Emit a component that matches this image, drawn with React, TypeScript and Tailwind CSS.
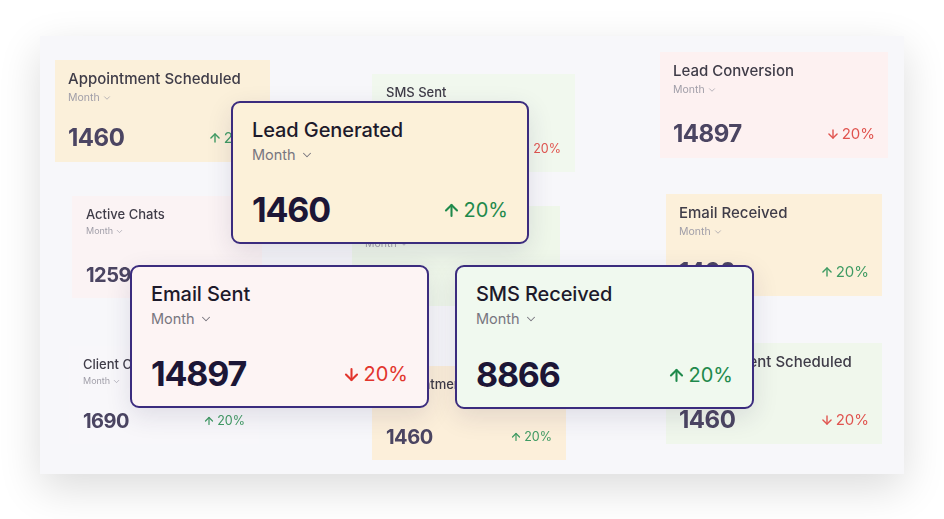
import { ArrowUp, ArrowDown, ChevronDown } from "lucide-react"

type Trend = "up" | "down"

type BgCardProps = {
  title: string
  value: string
  trend: Trend
  pos: string
  bg: string
  small?: boolean
}

// faded cards sitting in the back of the canvas
function BgCard({ title, value, trend, pos, bg, small }: BgCardProps) {
  return (
    <div className={`absolute ${pos} ${bg} flex flex-col blur-[0.4px] ${small ? "px-[14px] pt-[8px] pb-[11px]" : "px-[13px] pt-[8px] pb-[10px]"}`}>
      <div className={`text-[#3f3c48] font-medium whitespace-nowrap ${small ? "text-[13px] leading-[20px]" : "text-[15px] leading-[22px]"}`}>
        {title}
      </div>
      <div className={`flex items-center gap-[2px] text-[#a09ea8] ${small ? "text-[9px] leading-[14px]" : "text-[10.5px] leading-[16px]"}`}>
        Month <ChevronDown size={small ? 9 : 10} strokeWidth={1.8} />
      </div>
      <div className="flex-1" />
      <div className="flex items-center justify-between">
        <span className={`font-bold text-[#4b4562] tracking-[-0.5px] ${small ? "text-[20px] leading-[24px]" : "text-[24px] leading-[28px]"}`}>
          {value}
        </span>
        <span
          className={`flex items-center gap-[2px] ${trend === "up" ? "text-[#3f9b63]" : "text-[#e0544f]"} ${small ? "text-[12.5px]" : "text-[15px]"}`}
        >
          {trend === "up" ? <ArrowUp size={small ? 12 : 14} strokeWidth={2.4} /> : <ArrowDown size={small ? 12 : 14} strokeWidth={2.4} />}
          20%
        </span>
      </div>
    </div>
  )
}

type MainCardProps = {
  title: string
  value: string
  trend: Trend
  pos: string
  bg: string
}

function MainCard({ title, value, trend, pos, bg }: MainCardProps) {
  return (
    <div
      className={`absolute ${pos} ${bg} flex flex-col rounded-[9px] border-2 border-[#3b2c7e] px-[19px] pt-[12px] pb-[13px] shadow-[0_8px_26px_rgba(40,30,80,0.12)]`}
    >
      <div className="text-[20px] leading-[30px] font-medium text-[#1d1a2b] tracking-[-0.1px]">{title}</div>
      <div className="flex items-center gap-[4px] text-[14.5px] leading-[20px] text-[#78767f]">
        Month <ChevronDown size={14} strokeWidth={1.8} />
      </div>
      <div className="flex-1" />
      <div className="flex items-center justify-between">
        <span className="text-[34px] leading-[38px] font-bold text-[#1c1636] tracking-[-1.2px]">{value}</span>
        <span
          className={`flex items-center gap-[3px] text-[20px] ${trend === "up" ? "text-[#1f8a4c]" : "text-[#e2352d]"}`}
        >
          {trend === "up" ? <ArrowUp size={19} strokeWidth={2.6} /> : <ArrowDown size={19} strokeWidth={2.6} />}
          20%
        </span>
      </div>
    </div>
  )
}

export default function App() {
  return (
    <div
      className="w-[944px] h-[519px] bg-white pt-[36px] pl-[40px] overflow-hidden"
      style={{ fontFamily: "Inter, 'Noto Sans', sans-serif" }}
    >
      <div className="relative w-[864px] h-[438px] bg-[#f7f7fa] shadow-[0_14px_40px_rgba(0,0,0,0.14)]">
        {/* back layer */}
        <BgCard title="Appointment Scheduled" value="1460" trend="up" pos="left-[15px] top-[24px] w-[215px] h-[102px]" bg="bg-[#fbf0da]" />
        <BgCard title="SMS Sent" value="4521" trend="down" pos="left-[332px] top-[38px] w-[203px] h-[98px]" bg="bg-[#f1f8ee]" small />
        <BgCard title="Lead Conversion" value="14897" trend="down" pos="left-[620px] top-[16px] w-[228px] h-[106px]" bg="bg-[#fdf1f1]" />
        <BgCard title="Active Chats" value="12590" trend="up" pos="left-[32px] top-[160px] w-[190px] h-[102px]" bg="bg-[#fbf3f4]" small />
        <BgCard title="SMS Delivered" value="12541" trend="up" pos="left-[312px] top-[170px] w-[208px] h-[100px]" bg="bg-[#eff7ea]" />
        <BgCard title="Email Received" value="1460" trend="up" pos="left-[626px] top-[158px] w-[216px] h-[102px]" bg="bg-[#fcf0da]" />
        <BgCard title="Client Conversion" value="1690" trend="up" pos="left-[29px] top-[310px] w-[190px] h-[98px]" bg="bg-[#f8f7fa]" small />
        <BgCard title="Appointment Scheduled" value="1460" trend="up" pos="left-[332px] top-[330px] w-[194px] h-[94px]" bg="bg-[#fcefda]" small />
        <BgCard title="Appointment Scheduled" value="1460" trend="down" pos="left-[626px] top-[307px] w-[216px] h-[101px]" bg="bg-[#f0f7ec]" />

        {/* front layer */}
        <MainCard title="Lead Generated" value="1460" trend="up" pos="left-[191px] top-[65px] w-[298px] h-[143px]" bg="bg-[#fcf1d9]" />
        <MainCard title="Email Sent" value="14897" trend="down" pos="left-[90px] top-[229px] w-[299px] h-[143px]" bg="bg-[#fdf4f4]" />
        <MainCard title="SMS Received" value="8866" trend="up" pos="left-[415px] top-[229px] w-[299px] h-[144px]" bg="bg-[#f0f9ef]" />
      </div>
    </div>
  )
}
